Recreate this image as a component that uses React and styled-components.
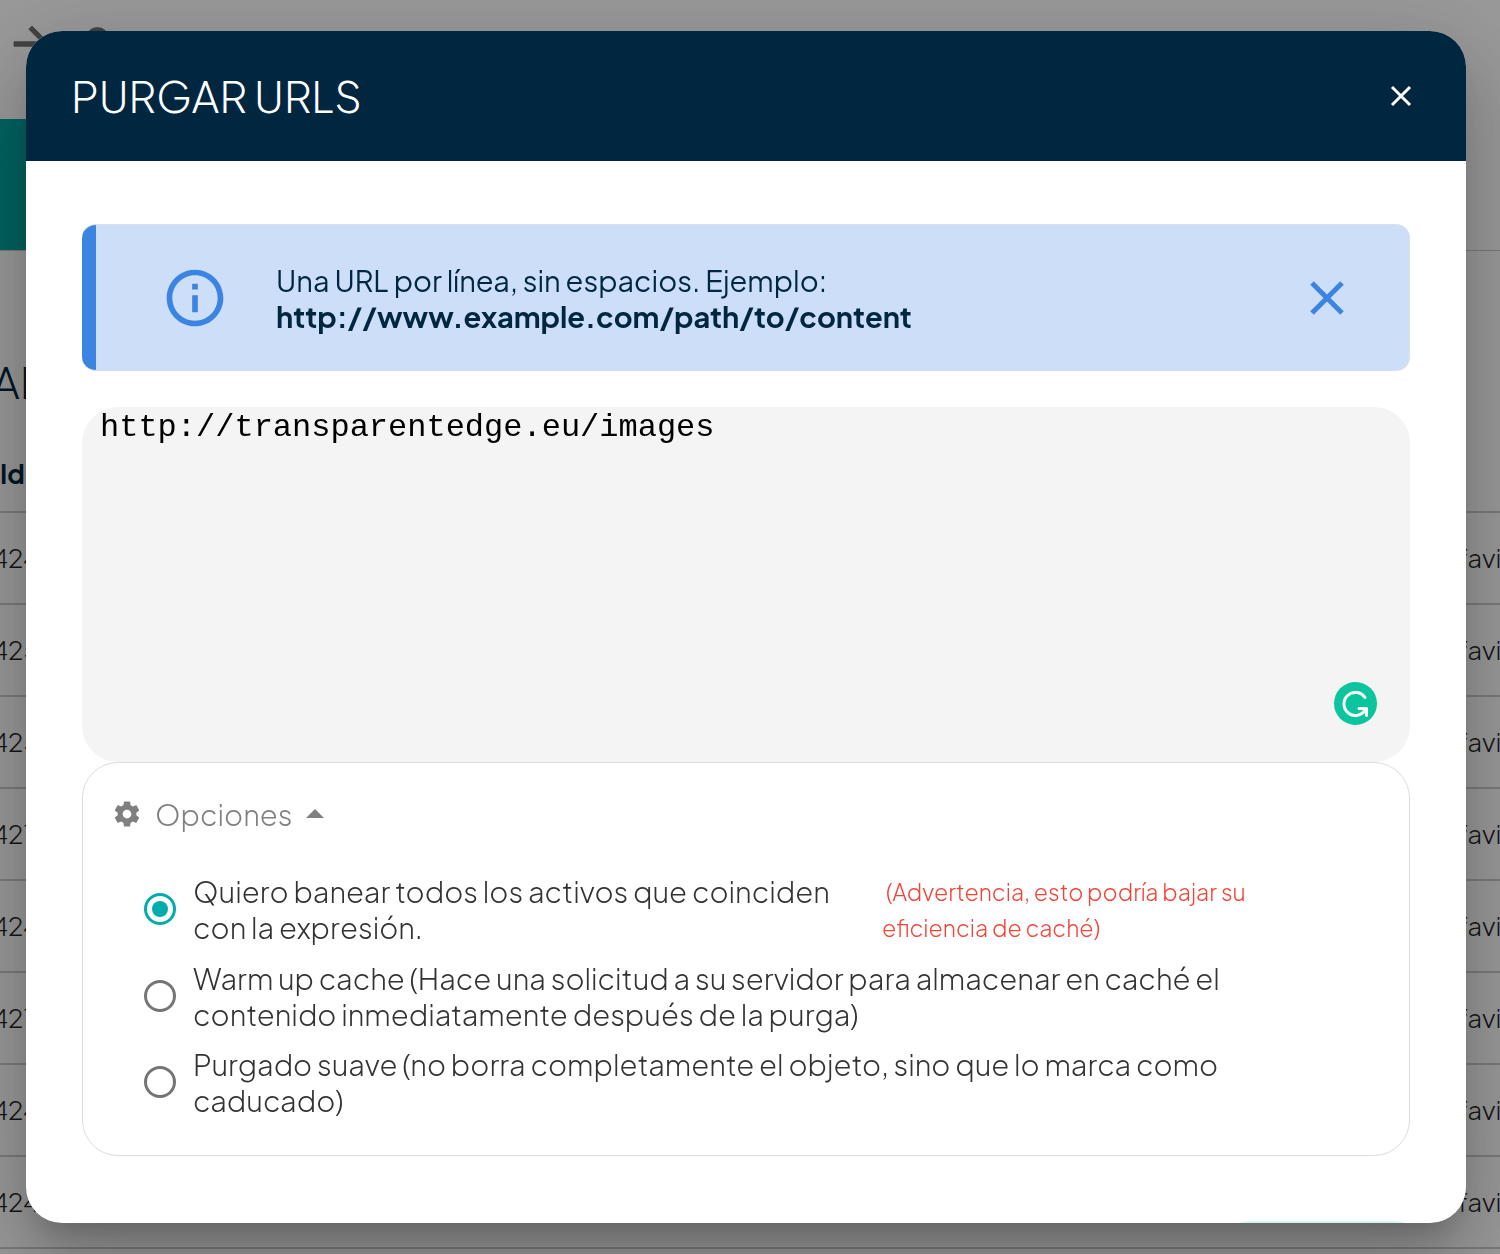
import React, { useState } from "react";
import styled, { createGlobalStyle } from "styled-components";

const sans = `"Plus Jakarta Sans", Inter, "Open Sans", sans-serif`;
const mono = `"Liberation Mono", monospace`;

const GlobalStyle = createGlobalStyle`
  *, *::before, *::after { box-sizing: border-box; }
  body { margin: 0; background: #fff; font-family: ${sans}; }
  button { margin: 0; padding: 0; border: 0; background: none; font: inherit; color: inherit; cursor: pointer; }
`;

/* ---------- page behind the dialog ---------- */

const Page = styled.div`
  height: 100vh;
  overflow: hidden;
`;

const TopBar = styled.header`
  display: flex;
  align-items: center;
  gap: 21px;
  height: 119px;
  padding: 17px 5px 48px;
  color: #6f6f6f;
`;

const IconSvg = styled.svg`
  display: block;
  flex: none;
  width: ${(p) => p.$size}px;
  height: ${(p) => p.$size}px;
  fill: currentColor;
  stroke: currentColor;
  stroke-width: ${(p) => p.$stroke || 0};
`;

const TabBand = styled.nav`
  height: 132px;
  border-bottom: 1px solid #ccc;
`;

const ActiveTab = styled.div`
  width: 25%;
  height: 100%;
  background: #00a5a1;
`;

const Content = styled.main`
  margin-left: -8px;
`;

const SectionTitle = styled.h2`
  margin: 0;
  padding: 105px 0 32px;
  color: #002640;
  font-size: 43px;
  line-height: 52px;
  font-weight: 300;
`;

const HistoryTable = styled.table`
  width: 100%;
  table-layout: fixed;
  border-collapse: collapse;
  color: #262626;
  font-size: 26px;
  font-weight: 300;
`;

const HeadCell = styled.th`
  height: 72px;
  padding: 0 0 4px 8px;
  border-bottom: 2px solid #ccc;
  color: #002640;
  font-weight: 700;
  text-align: left;
  width: ${(p) => p.$width || "auto"};
`;

const Cell = styled.td`
  height: 92px;
  padding: 0 0 2px;
  border-bottom: 2px solid #ccc;
  overflow: hidden;
  white-space: nowrap;
`;

/* ---------- dialog ---------- */

const Overlay = styled.div`
  position: fixed;
  inset: 0;
  display: flex;
  padding: 31px 34px 31px 26px;
  background: rgba(0, 0, 0, 0.4);
`;

const Dialog = styled.section`
  flex: 1;
  min-width: 0;
  display: flex;
  flex-direction: column;
  overflow: hidden;
  border-radius: 36px;
  background: #fff;
  box-shadow: 0 22px 30px -14px rgba(0, 0, 0, 0.2), 0 48px 76px 6px rgba(0, 0, 0, 0.14),
    0 18px 92px 16px rgba(0, 0, 0, 0.12);
`;

const DialogHeader = styled.header`
  flex: none;
  display: flex;
  align-items: center;
  justify-content: space-between;
  height: 130px;
  padding: 0 41px 0 45px;
  background: #002640;
  color: #fff;
`;

const DialogTitle = styled.h1`
  margin: 0;
  font-size: 43px;
  line-height: 52px;
  font-weight: 300;
`;

const CloseButton = styled.button`
  display: grid;
  place-items: center;
  width: 48px;
  height: 48px;
`;

const StrokeSvg = styled.svg`
  display: block;
  width: ${(p) => p.$size}px;
  height: ${(p) => p.$size}px;
  fill: none;
  stroke: currentColor;
  stroke-width: ${(p) => p.$stroke};
`;

const DialogBody = styled.div`
  flex: 1;
  min-height: 0;
  overflow: hidden;
  padding: 63px 56px;
`;

const Notice = styled.div`
  display: flex;
  align-items: center;
  min-height: 147px;
  margin-bottom: 36px;
  padding: 0 58px 0 79px;
  border: 1px solid #dcdfe4;
  border-left: 0;
  border-radius: 14px;
  background: linear-gradient(to right, #3b84e2 14px, #cddff8 14px);
  color: #3b84e2;
`;

const NoticeText = styled.p`
  flex: 1;
  margin: 0 0 0 47px;
  color: #002640;
  font-size: 29px;
  line-height: 36px;
`;

const Example = styled.strong`
  display: block;
  font-weight: 700;
`;

const Editor = styled.div`
  position: relative;
`;

const UrlInput = styled.textarea`
  display: block;
  width: 100%;
  height: 355px;
  padding: 3px 18px;
  border: 0;
  outline: 0;
  resize: none;
  border-radius: 36px;
  background: #f4f4f4;
  color: #000;
  font-family: ${mono};
  font-size: 32px;
  line-height: 36px;
`;

const CheckerBadge = styled.button`
  position: absolute;
  right: 33px;
  bottom: 37px;
`;

const Options = styled.fieldset`
  min-width: 0;
  margin: 0;
  padding: 33px 55px 37px 29px;
  border: 1px solid #dcdcdc;
  border-radius: 36px;
`;

const OptionsToggle = styled.button`
  display: flex;
  align-items: center;
  gap: 13px;
  height: 36px;
  color: #808080;
  font-size: 29px;
  font-weight: 300;
  line-height: 36px;
`;

const OptionList = styled.div`
  display: grid;
  gap: 14px;
  padding: 39px 0 0 32px;
`;

const OptionRow = styled.div`
  display: flex;
`;

const OptionLabel = styled.label`
  flex: 0 0 ${(p) => (p.$narrow ? "61%" : "100%")};
  display: flex;
  align-items: center;
  gap: 17px;
  padding-right: ${(p) => (p.$narrow ? 24 : 0)}px;
  color: #333;
  font-size: 29px;
  font-weight: 300;
  line-height: 36px;
`;

const Radio = styled.input`
  appearance: none;
  flex: none;
  display: grid;
  place-items: center;
  width: 32px;
  height: 32px;
  margin: 0;
  border: 3px solid #757575;
  border-radius: 50%;
  background: #fff;

  &:checked { border-color: #00acac; }
  &:checked::before {
    content: "";
    width: 16px;
    height: 16px;
    border-radius: 50%;
    background: #00acac;
  }
`;

const Warning = styled.p`
  margin: 3px 0 0;
  color: #f44336;
  font-size: 23px;
  font-weight: 300;
  line-height: 36px;
`;

const Actions = styled.div`
  display: flex;
  justify-content: flex-end;
  margin-right: -20px;
  padding-top: 65px;
`;

const SubmitButton = styled.button`
  flex: none;
  width: 216px;
  height: 84px;
  border-radius: 36px;
  background: #d9f2f2;
`;

const Cross = ({ size, stroke, inset = 2 }) => (
  <StrokeSvg $size={size} $stroke={stroke} viewBox={`0 0 ${size} ${size}`} aria-hidden="true">
    <path d={`M${inset} ${inset}L${size - inset} ${size - inset}M${size - inset} ${inset}L${inset} ${size - inset}`} />
  </StrokeSvg>
);

const Icon = ({ size, d, stroke }) => (
  <IconSvg $size={size} $stroke={stroke} viewBox="0 0 24 24" aria-hidden="true"><path d={d} /></IconSvg>
);

const paths = {
  arrow: "M12 4l-1.41 1.41L16.17 11H4v2h12.17l-5.58 5.59L12 20l8-8z",
  search: "M15.5 14h-.79l-.28-.27A6.47 6.47 0 0 0 16 9.5 6.5 6.5 0 1 0 9.5 16c1.61 0 3.09-.59 4.23-1.57l.27.28v.79l5 4.99L20.49 19l-4.99-5zm-6 0C7.01 14 5 11.99 5 9.5S7.01 5 9.5 5 14 7.01 14 9.5 11.99 14 9.5 14z",
  info: "M11 7h2v2h-2zm0 4h2v6h-2zm1-9C6.48 2 2 6.48 2 12s4.48 10 10 10 10-4.48 10-10S17.52 2 12 2zm0 18c-4.41 0-8-3.59-8-8s3.59-8 8-8 8 3.59 8 8-3.59 8-8 8z",
  gear: "M19.43 12.98c.04-.32.07-.64.07-.98s-.03-.66-.07-.98l2.11-1.65c.19-.15.24-.42.12-.64l-2-3.46c-.12-.22-.39-.3-.61-.22l-2.49 1c-.52-.4-1.08-.73-1.69-.98l-.38-2.65C14.46 2.18 14.25 2 14 2h-4c-.25 0-.46.18-.49.42l-.38 2.65c-.61.25-1.17.59-1.69.98l-2.49-1c-.23-.09-.49 0-.61.22l-2 3.46c-.13.22-.07.49.12.64l2.11 1.65c-.04.32-.07.65-.07.98s.03.66.07.98l-2.11 1.65c-.19.15-.24.42-.12.64l2 3.46c.12.22.39.3.61.22l2.49-1c.52.4 1.08.73 1.69.98l.38 2.65c.03.24.24.42.49.42h4c.25 0 .46-.18.49-.42l.38-2.65c.61-.25 1.17-.59 1.69-.98l2.49 1c.23.09.49 0 .61-.22l2-3.46c.12-.22.07-.49-.12-.64l-2.11-1.65zM12 15.5c-1.93 0-3.5-1.57-3.5-3.5s1.57-3.5 3.5-3.5 3.5 1.57 3.5 3.5-1.57 3.5-3.5 3.5z",
};

const ids = ["4242", "4251", "4250", "4217", "4245", "4216", "4243", "4242", "4240"];

const options = [
  {
    id: "ban",
    text: "Quiero banear todos los activos que coinciden con la expresión.",
    warning: "\u00a0(Advertencia, esto podría bajar su eficiencia de caché)",
  },
  {
    id: "warm",
    text: "Warm up cache (Hace una solicitud a su servidor para almacenar en caché el contenido inmediatamente después de la purga)",
  },
  {
    id: "soft",
    text: "Purgado suave (no borra completamente el objeto, sino que lo marca como caducado)",
  },
];

export default function App() {
  const [mode, setMode] = useState("ban");
  const [urls, setUrls] = useState("http://transparentedge.eu/images");

  return (
    <>
      <GlobalStyle />
      <Page aria-hidden="true">
        <TopBar>
          <Icon size={54} d={paths.arrow} stroke={0.4} />
          <Icon size={44} d={paths.search} stroke={0.4} />
        </TopBar>
        <TabBand><ActiveTab /></TabBand>
        <Content>
          <SectionTitle>AL</SectionTitle>
          <HistoryTable>
            <thead>
              <tr>
                <HeadCell>Id</HeadCell>
                <HeadCell $width="42px" />
              </tr>
            </thead>
            <tbody>
              {ids.map((id, i) => (
                <tr key={i}>
                  <Cell>{id}</Cell>
                  <Cell>favicon.ico</Cell>
                </tr>
              ))}
            </tbody>
          </HistoryTable>
        </Content>
      </Page>

      <Overlay>
        <Dialog role="dialog" aria-modal="true" aria-labelledby="purge-title">
          <DialogHeader>
            <DialogTitle id="purge-title">PURGAR URLS</DialogTitle>
            <CloseButton type="button" aria-label="Cerrar">
              <Cross size={24} stroke={3} inset={3} />
            </CloseButton>
          </DialogHeader>
          <DialogBody>
            <Notice>
              <Icon size={68} d={paths.info} />
              <NoticeText>
                Una URL por línea, sin espacios. Ejemplo:
                <Example>http://www.example.com/path/to/content</Example>
              </NoticeText>
              <CloseButton type="button" aria-label="Descartar aviso">
                <Cross size={34} stroke={5} />
              </CloseButton>
            </Notice>

            <Editor>
              <UrlInput
                aria-label="URLs"
                spellCheck={false}
                value={urls}
                onChange={(e) => setUrls(e.target.value)}
              />
              <CheckerBadge type="button" aria-label="Grammarly">
                <StrokeSvg $size={43} $stroke={3} viewBox="0 0 43 43" aria-hidden="true">
                  <circle cx="21.5" cy="21.5" r="21.5" fill="#0ac59d" stroke="none" />
                  <g stroke="#fff" strokeLinecap="round" strokeLinejoin="round">
                    <path d="M31 15.5A11.5 11.5 0 1 0 31.5 27.5" />
                    <path d="M25 26.5H32.5V33.5" />
                  </g>
                </StrokeSvg>
              </CheckerBadge>
            </Editor>

            <Options aria-label="Opciones de purga">
              <OptionsToggle type="button" aria-expanded="true">
                <Icon size={30} d={paths.gear} />
                Opciones
                <IconSvg $size={18} viewBox="0 0 18 18" aria-hidden="true">
                  <path d="M0 13L9 4L18 13Z" />
                </IconSvg>
              </OptionsToggle>
              <OptionList>
                {options.map((o) => (
                  <OptionRow key={o.id}>
                    <OptionLabel htmlFor={o.id} $narrow={Boolean(o.warning)}>
                      <Radio
                        type="radio"
                        name="mode"
                        id={o.id}
                        checked={mode === o.id}
                        onChange={() => setMode(o.id)}
                      />
                      {o.text}
                    </OptionLabel>
                    {o.warning && <Warning>{o.warning}</Warning>}
                  </OptionRow>
                ))}
              </OptionList>
            </Options>

            <Actions>
              <SubmitButton type="button" aria-label="Purgar" />
            </Actions>
          </DialogBody>
        </Dialog>
      </Overlay>
    </>
  );
}
